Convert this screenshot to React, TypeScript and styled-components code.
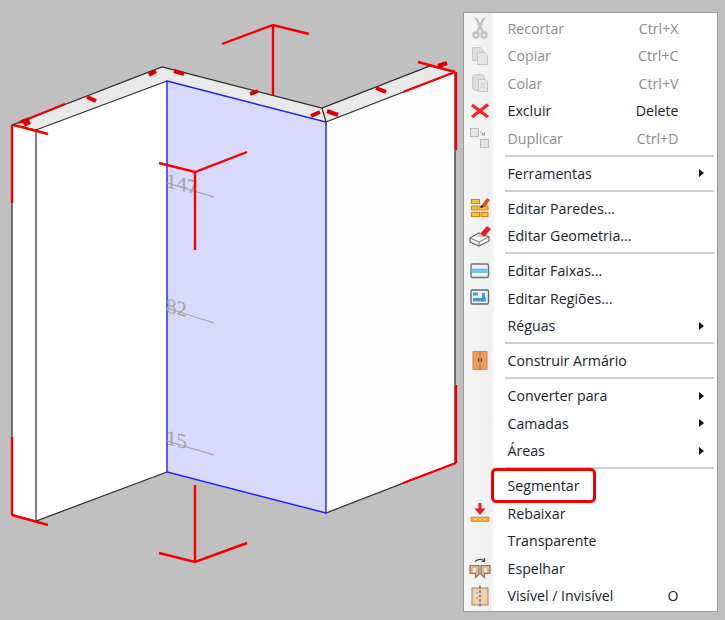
import React from 'react';
import styled, { createGlobalStyle } from 'styled-components';

const GlobalStyle = createGlobalStyle`
  html, body {
    margin: 0;
    padding: 0;
    background: #c0c0c0;
  }
`;

const Stage = styled.div`
  position: relative;
  width: 725px;
  height: 620px;
  overflow: hidden;
  background: #c0c0c0;
`;

const Drawing = styled.svg`
  display: block;
  width: 725px;
  height: 620px;
`;

const RulerLabel = styled.text`
  font-family: "Liberation Serif", serif;
  font-size: 21px;
  fill: #a4a4a4;
`;

const Menu = styled.div`
  position: absolute;
  left: 463px;
  top: 12px;
  width: 255px;
  height: 600px;
  box-sizing: border-box;
  padding: 1.5px 2px 0 2px;
  background: #fff;
  border: 1.5px solid #9c9c9c;
  display: flex;
  flex-direction: column;
  font-family: "Open Sans", sans-serif;
  font-size: 14.2px;
`;

const Gutter = styled.div`
  position: absolute;
  left: 0;
  top: 0;
  bottom: 0;
  width: 30px;
  background: linear-gradient(90deg, #f6f6f6, #f0f0f0 85%, #f8f8f8);
`;

const Row = styled.div<{ $disabled?: boolean }>`
  position: relative;
  height: 27.5px;
  flex-shrink: 0;
  display: grid;
  grid-template-columns: 41.5px 1fr 50px 36.5px;
  align-items: center;
  color: ${props => (props.$disabled ? '#8c8c8c' : '#20222a')};
`;

const IconCell = styled.div`
  position: relative;
  display: flex;
  align-items: center;
  justify-content: center;
  width: 28px;
  height: 27.5px;
`;

const Label = styled.span`
  white-space: nowrap;
`;

const Shortcut = styled.span`
  text-align: right;
  white-space: nowrap;
`;

const Arrow = styled.span`
  justify-self: start;
  margin-left: 20px;
  width: 0;
  height: 0;
  border-top: 4.5px solid transparent;
  border-bottom: 4.5px solid transparent;
  border-left: 5px solid #111;
`;

const Separator = styled.div`
  position: relative;
  flex-shrink: 0;
  height: 2px;
  margin: 2.75px 1px 2.75px 39px;
  background: #cfcfcf;
`;

const Highlight = styled.div`
  position: absolute;
  left: 24.5px;
  top: -4px;
  width: 105px;
  height: 35px;
  box-sizing: border-box;
  border: 3px solid #f00000;
  border-radius: 5px;
`;

const IconSvg: React.FC<{ children: React.ReactNode }> = ({ children }) => (
  <svg width="24" height="24" viewBox="0 0 24 24">{children}</svg>
);

const Scissors = () => (
  <IconSvg>
    <g fill="none" stroke="#bdbdbd" strokeWidth="2.2">
      <path d="M8 2l7 14M16 2L9 16" />
      <circle cx="8" cy="19" r="2.6" />
      <circle cx="16" cy="19" r="2.6" />
    </g>
  </IconSvg>
);

const Pages = () => (
  <IconSvg>
    <g fill="#dedede" stroke="#c6c6c6">
      <path d="M4.500 3.500h8l3 3v10h-11z" />
      <path d="M9.500 8.500h7l3 3v9h-10z" fill="#e6e6e6" />
    </g>
  </IconSvg>
);

const Clipboard = () => (
  <IconSvg>
    <g fill="#dedede" stroke="#c8c8c8">
      <rect x="4.500" y="3.500" width="12" height="16" rx="3" />
      <path d="M10.500 8.500h7l2 2v10h-9z" fill="#e8e8e8" />
      <path d="M12.500 13h5M12.500 16h5" />
    </g>
  </IconSvg>
);

const Cross = () => (
  <IconSvg>
    <path d="M4 6l16 12M20 5.500L4 18" stroke="#f8222e" strokeWidth="3.200" fill="none" />
  </IconSvg>
);

const DuplicateIcon = () => (
  <IconSvg>
    <rect x="2.500" y="2.500" width="8" height="8" fill="#e4e4e4" stroke="#bbb" />
    <rect x="12.500" y="13.500" width="8" height="8" fill="#e4e4e4" stroke="#bbb" />
    <path d="M12 6l4 2.500M16.500 6v3h-3" stroke="#999" fill="none" />
  </IconSvg>
);

const WallsIcon = () => (
  <IconSvg>
    <g fill="#f6bd55" stroke="#cf8412">
      <rect x="3.500" y="3.500" width="8" height="4" />
      <rect x="3.500" y="10" width="6" height="4" />
      <rect x="11" y="10" width="9" height="4" />
      <rect x="3.500" y="16.500" width="8" height="4" />
      <rect x="13" y="16.500" width="7" height="4" />
    </g>
    <path d="M14 9l5-7 3 2-5 7z" fill="#d8501c" />
    <path d="M12 11l2-2 2 2-3 1z" fill="#222" />
  </IconSvg>
);

const GeometryIcon = () => (
  <IconSvg>
    <path d="M2 14l9-5 10 4v4l-10 5-9-4z" fill="#f6f6f6" stroke="#666" strokeWidth="1.200" />
    <path d="M2 14l9 4 10-5M11 18v4" fill="none" stroke="#777" />
    <path d="M12 10l7-8 4 3-7 8z" fill="#e3202c" />
    <path d="M9 13l3-4 4 4z" fill="#eac08f" />
  </IconSvg>
);

const BandsIcon = () => (
  <IconSvg>
    <rect x="3" y="5" width="17.500" height="13.500" rx="1.500" fill="#f2f2f2" stroke="#6c7076" strokeWidth="1.400" />
    <rect x="4" y="9.500" width="15.500" height="4.500" fill="#6cc4ef" />
  </IconSvg>
);

const RegionsIcon = () => (
  <IconSvg>
    <rect x="3" y="4" width="17.500" height="14" rx="1.500" fill="#f2f2f2" stroke="#626870" strokeWidth="1.400" />
    <path d="M5 6.500h5v3H5zM14 7h3v4.500h1v4H5v-3.500h9z" fill="#3f9bdc" />
  </IconSvg>
);

const CabinetIcon = () => (
  <IconSvg>
    <rect x="5" y="2.500" width="14" height="18" fill="#ee9d63" stroke="#d98743" />
    <path d="M12 2.500v18" stroke="#b8682c" />
    <path d="M10.500 9v4M13.500 9v4" stroke="#7a4a20" />
  </IconSvg>
);

const LowerIcon = () => (
  <IconSvg>
    <path d="M12 2v7" stroke="#f01c28" strokeWidth="3" />
    <path d="M6.500 7.500L12 14l5.500-6.500z" fill="#f01c28" />
    <rect x="3" y="16" width="18" height="4.500" fill="#eda93a" stroke="#c98418" strokeWidth=".6" />
    <path d="M6 18.250h3M10.500 18.250h3M15 18.250h3" stroke="#fff" />
  </IconSvg>
);

const MirrorIcon = () => (
  <IconSvg>
    <path d="M7 5.500q4-3.500 9-1M16.500 2v3.500h-3" stroke="#444" fill="none" strokeWidth="1.200" />
    <path d="M2 9.500h9v9l-3.500 3v-4H2zM22 9.500h-9v9l3.500 3v-4H22z" fill="#e3b48a" stroke="#8c7460" strokeWidth="1.200" />
    <path d="M5 12h3v4H5zM16 12h3v4h-3z" fill="#fbe7d2" />
  </IconSvg>
);

const VisibleIcon = () => (
  <IconSvg>
    <rect x="4" y="4" width="16" height="17" fill="#f1d2ae" stroke="#99836c" />
    <path d="M12 1.500v22" stroke="#444" strokeDasharray="3 1.500" />
    <circle cx="9" cy="9" r="1" fill="#8fb4cf" />
    <circle cx="9" cy="14" r="1" fill="#8fb4cf" />
  </IconSvg>
);

type Item = {
  label?: string;
  icon?: React.ReactNode;
  shortcut?: string;
  disabled?: boolean;
  submenu?: boolean;
  highlight?: boolean;
  separator?: boolean;
};

const items: Item[] = [
  { label: 'Recortar', icon: <Scissors />, shortcut: 'Ctrl+X', disabled: true },
  { label: 'Copiar', icon: <Pages />, shortcut: 'Ctrl+C', disabled: true },
  { label: 'Colar', icon: <Clipboard />, shortcut: 'Ctrl+V', disabled: true },
  { label: 'Excluir', icon: <Cross />, shortcut: 'Delete' },
  { label: 'Duplicar', icon: <DuplicateIcon />, shortcut: 'Ctrl+D', disabled: true },
  { separator: true },
  { label: 'Ferramentas', submenu: true },
  { separator: true },
  { label: 'Editar Paredes...', icon: <WallsIcon /> },
  { label: 'Editar Geometria...', icon: <GeometryIcon /> },
  { separator: true },
  { label: 'Editar Faixas...', icon: <BandsIcon /> },
  { label: 'Editar Regiões...', icon: <RegionsIcon /> },
  { label: 'Réguas', submenu: true },
  { separator: true },
  { label: 'Construir Armário', icon: <CabinetIcon /> },
  { separator: true },
  { label: 'Converter para', submenu: true },
  { label: 'Camadas', submenu: true },
  { label: 'Áreas', submenu: true },
  { separator: true },
  { label: 'Segmentar', highlight: true },
  { label: 'Rebaixar', icon: <LowerIcon /> },
  { label: 'Transparente' },
  { label: 'Espelhar', icon: <MirrorIcon /> },
  { label: 'Visível / Invisível', icon: <VisibleIcon />, shortcut: 'O' },
];

const redSegments = [
  'M12 125V203', 'M12 437V515', 'M12 515L48 525', 'M14 125L48 134', 'M18 123L65 104',
  'M418 62L455 72', 'M403 92L455 72', 'M456 72V150', 'M456 385V463', 'M403 483L456 463',
  'M222 44L273 25L309 34', 'M273 25V95',
  'M159 163L195 172L247 152', 'M195 172V250',
  'M195 485V562', 'M159 553L195 562L247 543',
];

const redTicks = [
  'M21 122L29 119', 'M24 125L30 122', 'M87 97L96 101', 'M149 75L156 71', 'M174 71L184 74',
  'M250 94L258 91', 'M311 116L320 112', 'M327 111L338 115', 'M376 88L386 92', 'M438 66L447 63',
];

const ScenePlan: React.FC = () => (
  <Drawing viewBox="0 0 725 620">
    <path d="M12 125L162 67L322 108L430 66L455 72L326 122L167 81L36 130z" fill="#e9e9e9" />
    <path d="M12 125L36 130V521L12 515z" fill="#fff" />
    <path d="M36 130L167 81V472L36 521z" fill="#fff" />
    <path d="M326 122L455 72V463L326 513z" fill="#fdfdfd" />
    <path d="M167 81L326 122V513L167 472z" fill="#d9d9fb" />

    <g fill="none" stroke="#2a2a2a" strokeWidth="1.200">
      <path d="M12 125L162 67L322 108L430 66L455 72V463L326 513" />
      <path d="M12 125V515L36 521L167 472" />
      <path d="M36 130V521" />
      <path d="M12 125L36 130L167 81" />
      <path d="M322 108L326 122L455 72" />
    </g>
    <path d="M167 81L326 122V513L167 472z" fill="none" stroke="#2020f0" strokeWidth="1.400" />

    <g stroke="#a4a4a4" strokeWidth="1.200" fill="none">
      <path d="M167 183L214 197" />
      <path d="M167 308L214 323" />
      <path d="M167 441L214 455" />
    </g>
    <RulerLabel transform="translate(166 187) skewY(14)">147</RulerLabel>
    <RulerLabel transform="translate(166 312) skewY(14)">82</RulerLabel>
    <RulerLabel transform="translate(166 444) skewY(14)">15</RulerLabel>

    <g fill="none" stroke="#f40000" strokeWidth="2.400">
      {redSegments.map(d => <path key={d} d={d} />)}
    </g>
    <g fill="none" stroke="#d80000" strokeWidth="4">
      {redTicks.map(d => <path key={d} d={d} />)}
    </g>
  </Drawing>
);

const ContextMenu: React.FC = () => (
  <Menu>
    <Gutter />
    {items.map((item, i) =>
      item.separator ? (
        <Separator key={i} />
      ) : (
        <Row key={i} $disabled={item.disabled}>
          <IconCell>{item.icon}</IconCell>
          <Label>{item.label}</Label>
          <Shortcut>{item.shortcut}</Shortcut>
          {item.submenu ? <Arrow /> : <span />}
          {item.highlight && <Highlight />}
        </Row>
      )
    )}
  </Menu>
);

export default function App() {
  return (
    <>
      <GlobalStyle />
      <Stage>
        <ScenePlan />
        <ContextMenu />
      </Stage>
    </>
  );
}
